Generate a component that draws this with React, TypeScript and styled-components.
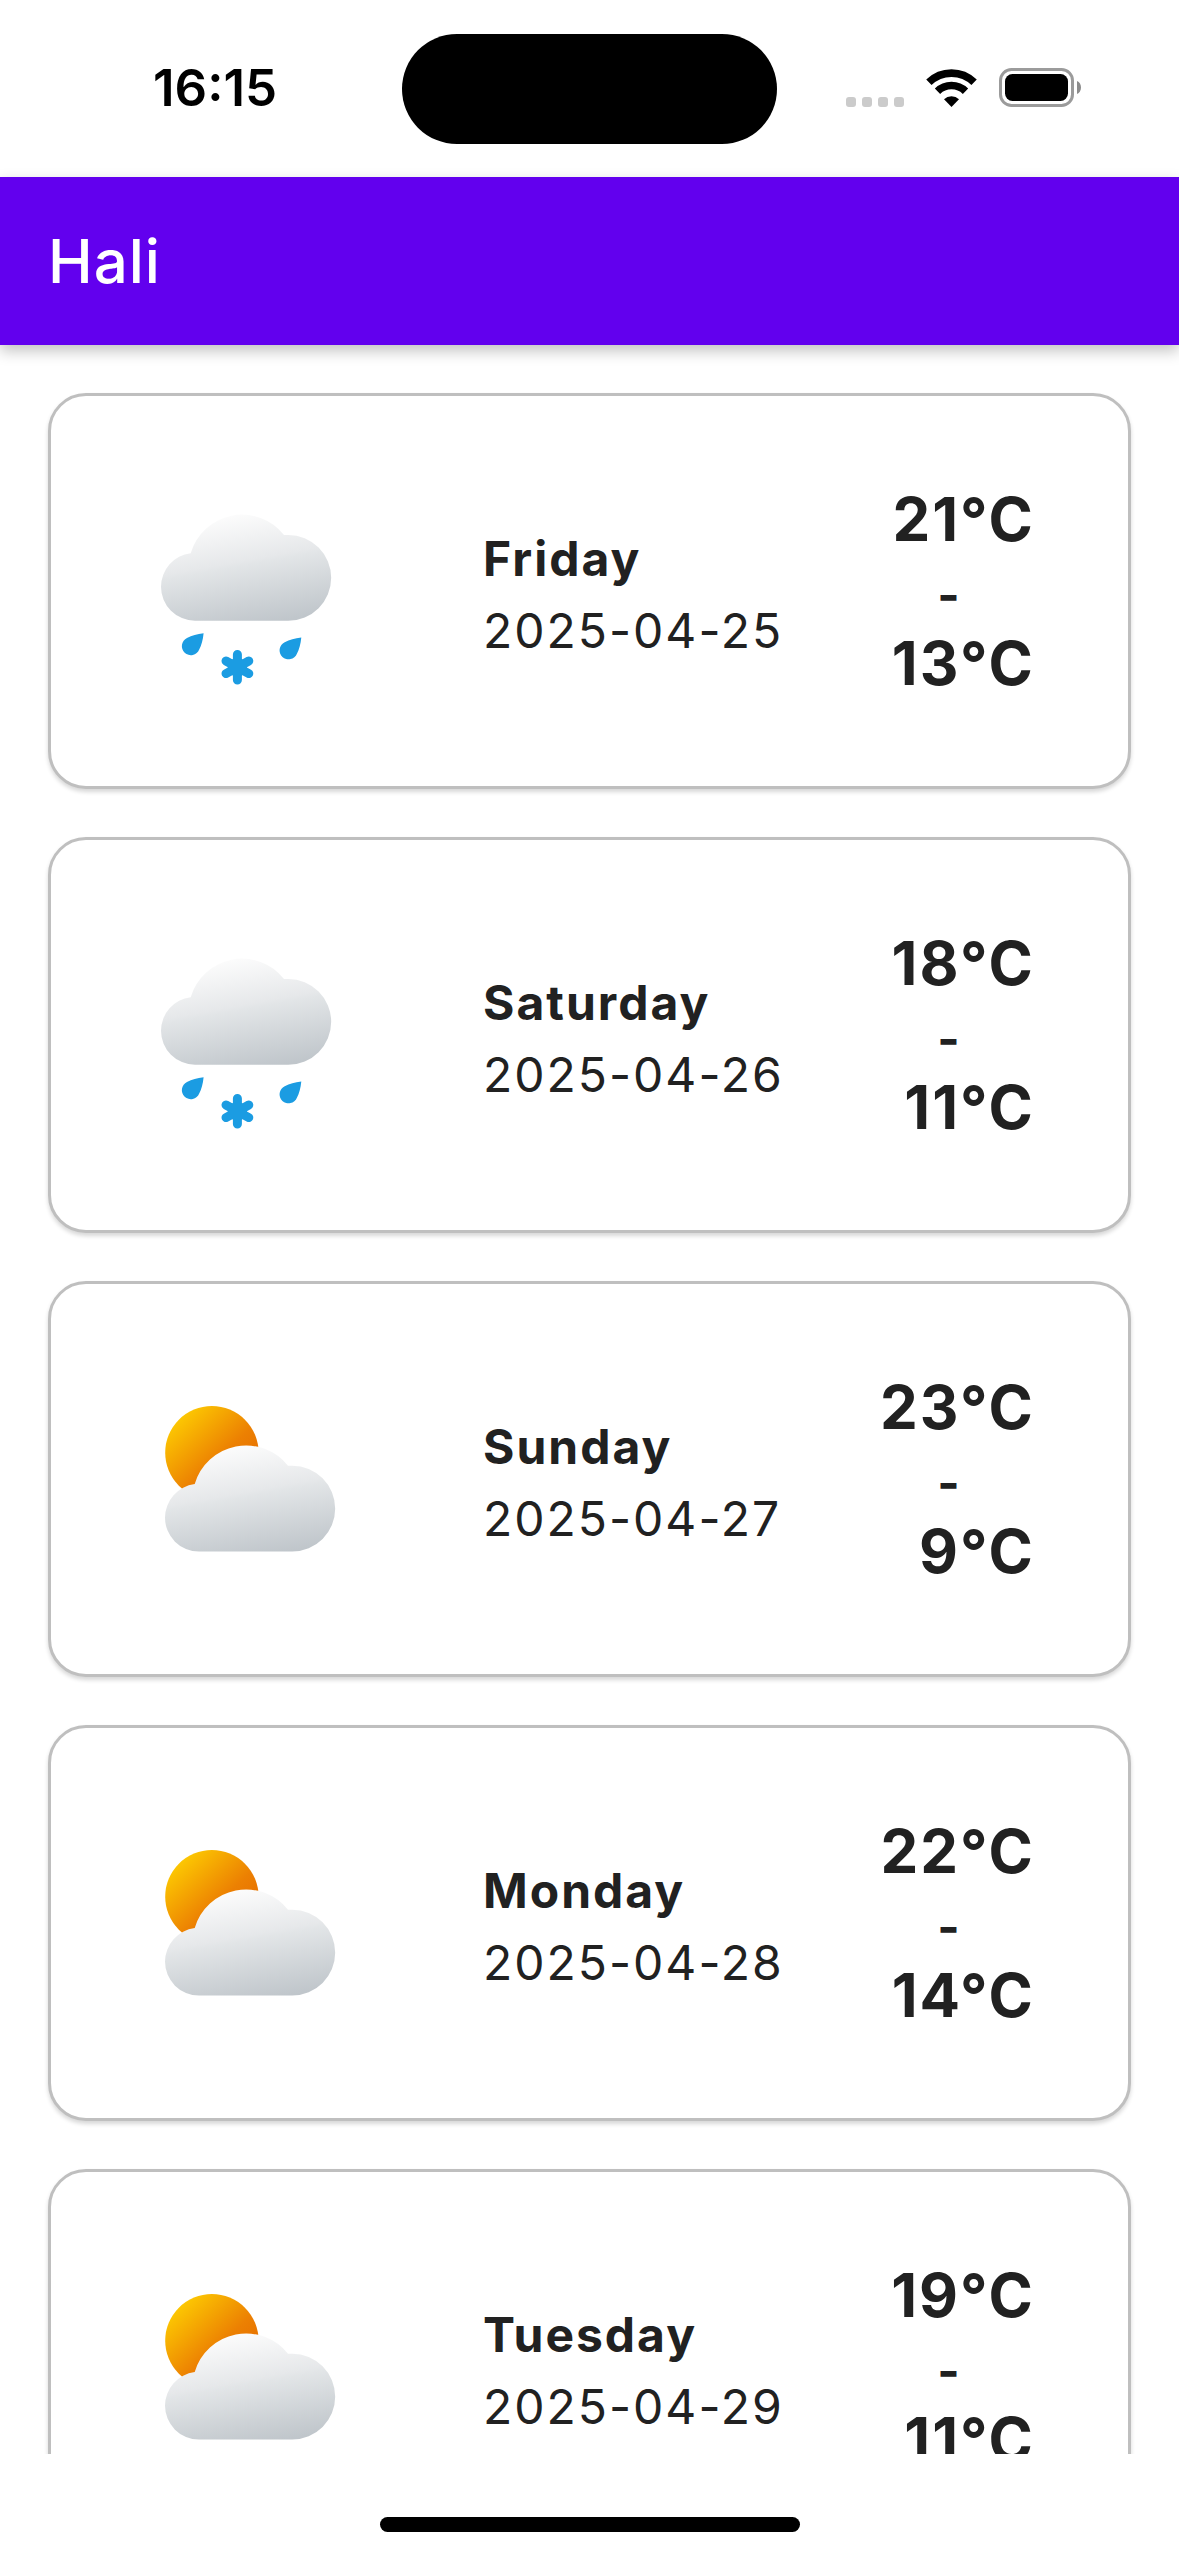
import React from "react";
import styled, { createGlobalStyle } from "styled-components";

type Condition = "sleet" | "partlyCloudy";

interface Forecast {
  day: string;
  date: string;
  high: number;
  low: number;
  condition: Condition;
}

const forecasts: Forecast[] = [
  { day: "Friday", date: "2025-04-25", high: 21, low: 13, condition: "sleet" },
  { day: "Saturday", date: "2025-04-26", high: 18, low: 11, condition: "sleet" },
  { day: "Sunday", date: "2025-04-27", high: 23, low: 9, condition: "partlyCloudy" },
  { day: "Monday", date: "2025-04-28", high: 22, low: 14, condition: "partlyCloudy" },
  { day: "Tuesday", date: "2025-04-29", high: 19, low: 11, condition: "partlyCloudy" },
];

const GlobalStyle = createGlobalStyle`
  *, *::before, *::after { box-sizing: border-box; }
  body {
    margin: 0;
    background: #fff;
    color: #212121;
    font-family: Inter, "Liberation Sans", sans-serif;
  }
`;

const Screen = styled.div`
  display: flex;
  flex-direction: column;
  height: 100vh;
`;

const StatusBar = styled.div`
  display: grid;
  grid-template-columns: 1fr 375px 1fr;
  align-items: center;
  flex: none;
  height: 177px;
  color: #000;
`;

const Clock = styled.time`
  padding: 0 0 2px 28px;
  text-align: center;
  font-size: 51px;
  font-weight: 600;
  line-height: 60px;
`;

const Island = styled.div`
  height: 110px;
  border-radius: 55px;
  background: #000;
`;

const StatusIcons = styled.div`
  display: flex;
  align-items: center;
  justify-content: flex-end;
  gap: 22px;
  padding: 0 98px 2px 0;
`;

const AppBar = styled.header`
  display: flex;
  align-items: center;
  flex: none;
  height: 168px;
  padding: 0 48px;
  background: #6200ee;
  color: #fff;
  box-shadow: 0 6px 14px rgba(0, 0, 0, 0.24);
  z-index: 1;
`;

const Title = styled.h1`
  margin: 0;
  font-size: 60px;
  font-weight: 500;
  line-height: 72px;
  letter-spacing: 1px;
`;

const List = styled.ul`
  display: flex;
  flex-direction: column;
  flex: 1;
  gap: 48px;
  min-height: 0;
  margin: 0;
  padding: 48px;
  overflow-y: auto;
  scrollbar-width: none;
  list-style: none;
`;

const Card = styled.li`
  display: grid;
  grid-template-columns: 339fr 381fr 171fr;
  align-items: center;
  flex: none;
  padding: 87px 93px;
  border: 3px solid #bfbfbf;
  border-radius: 38px;
  background: #fff;
  box-shadow: 0 3px 4px rgba(0, 0, 0, 0.16);
  letter-spacing: 2px;
`;

const WeatherIcon = styled.svg`
  display: block;
  width: 216px;
  height: 216px;
`;

const DayInfo = styled.div`
  padding-top: 8px;
  font-size: 48px;
  line-height: 72px;
`;

const DayName = styled.div`
  font-weight: 700;
`;

const Temperatures = styled.div`
  display: flex;
  flex-direction: column;
  font-size: 60px;
  font-weight: 700;
  line-height: 72px;
  text-align: right;
  white-space: nowrap;
`;

const Dash = styled.span`
  height: 72px;
  font-size: 48px;
  line-height: 80px;
  text-align: center;
`;

const BottomBar = styled.footer`
  display: flex;
  align-items: flex-end;
  justify-content: center;
  flex: none;
  height: 102px;
  padding-bottom: 24px;
`;

const HomeIndicator = styled.div`
  width: 420px;
  height: 15px;
  border-radius: 8px;
  background: #000;
`;

function SignalIcon() {
  return (
    <svg width="58" height="38" viewBox="0 0 58 38" fill="#cbcbcb" aria-hidden="true">
      {[0, 16, 32, 48].map((x) => (
        <rect key={x} x={x} y="28" width="10" height="10" rx="3" />
      ))}
    </svg>
  );
}

function WifiIcon() {
  return (
    <svg width="51" height="38" viewBox="0 0 51 38" aria-hidden="true">
      <g fill="none" stroke="#000" strokeWidth="7.6">
        <path d="M2.9 13.3A32.3 32.3 0 0 1 48.1 13.3" />
        <path d="M11.5 22.2A20 20 0 0 1 39.5 22.2" />
      </g>
      <path d="M25.5 38L18 30.3A10.8 10.8 0 0 1 33 30.3Z" />
    </svg>
  );
}

function BatteryIcon() {
  return (
    <svg width="82" height="39" viewBox="0 0 82 39" aria-hidden="true">
      <rect x="1.5" y="1.5" width="72" height="36" rx="11" fill="none" stroke="#9b9b9b" strokeWidth="3" />
      <rect x="6" y="6" width="63" height="27" rx="7.5" />
      <path d="M78 13C80.600 14.200 82 16.600 82 19.500S80.600 24.800 78 26Z" fill="#8c8c8c" />
    </svg>
  );
}

const cloudPath =
  "M51 137.700A34 34 0 0 1 17 103.700A34 34 0 0 1 46.700 70.200A53.500 53.500 0 0 1 140 51.900L144.300 51.900A42.900 42.900 0 0 1 144.300 137.700Z";
const dropPath = "M59.600 150.300C59 157 57.400 162.500 55.200 166.500A9 9 0 1 1 43 155C48 152.500 53 151.200 59.600 150.300Z";

function ConditionIcon({ condition }: { condition: Condition }) {
  const id = React.useId();
  const cloudFill = `${id}-cloud`;
  const sunFill = `${id}-sun`;
  const sleet = condition === "sleet";
  return (
    <WeatherIcon viewBox="0 0 216 216" role="img" aria-label={sleet ? "Sleet" : "Partly cloudy"}>
      <defs>
        <linearGradient id={cloudFill} gradientUnits="userSpaceOnUse" x1="92" y1="31" x2="112" y2="142">
          <stop offset="0" stopColor="#fcfcfc" />
          <stop offset="0.42" stopColor="#e6e8ea" />
          <stop offset="0.46" stopColor="#e2e5e7" />
          <stop offset="1" stopColor="#c0c6cb" />
        </linearGradient>
        <linearGradient id={sunFill} gradientUnits="userSpaceOnUse" x1="36" y1="48" x2="99" y2="115">
          <stop offset="0" stopColor="#fcc602" />
          <stop offset="0.6" stopColor="#ec8002" />
          <stop offset="1" stopColor="#e56b00" />
        </linearGradient>
      </defs>
      {sleet ? (
        <>
          <path d={cloudPath} fill={`url(#${cloudFill})`} />
          <g fill="#1b9ce2">
            <path d={dropPath} />
            <path d={dropPath} transform="translate(97.700 4.200)" />
            <circle cx="93.400" cy="184.300" r="9.500" />
          </g>
          <path
            d="M93.400 171.500V197.100M82 178L104.800 190.600M104.800 178L82 190.600"
            stroke="#1b9ce2"
            strokeWidth="9"
            strokeLinecap="round"
          />
        </>
      ) : (
        <>
          <circle cx="67.900" cy="81.700" r="46.700" fill={`url(#${sunFill})`} />
          <path d={cloudPath} fill={`url(#${cloudFill})`} transform="translate(4 42.900)" />
        </>
      )}
    </WeatherIcon>
  );
}

export default function App() {
  return (
    <Screen>
      <GlobalStyle />
      <StatusBar>
        <Clock>16:15</Clock>
        <Island />
        <StatusIcons>
          <SignalIcon />
          <WifiIcon />
          <BatteryIcon />
        </StatusIcons>
      </StatusBar>
      <AppBar>
        <Title>Hali</Title>
      </AppBar>
      <List>
        {forecasts.map((forecast) => (
          <Card key={forecast.date}>
            <ConditionIcon condition={forecast.condition} />
            <DayInfo>
              <DayName>{forecast.day}</DayName>
              <time dateTime={forecast.date}>{forecast.date}</time>
            </DayInfo>
            <Temperatures>
              <span>{forecast.high}°C</span>
              <Dash>-</Dash>
              <span>{forecast.low}°C</span>
            </Temperatures>
          </Card>
        ))}
      </List>
      <BottomBar>
        <HomeIndicator />
      </BottomBar>
    </Screen>
  );
}
